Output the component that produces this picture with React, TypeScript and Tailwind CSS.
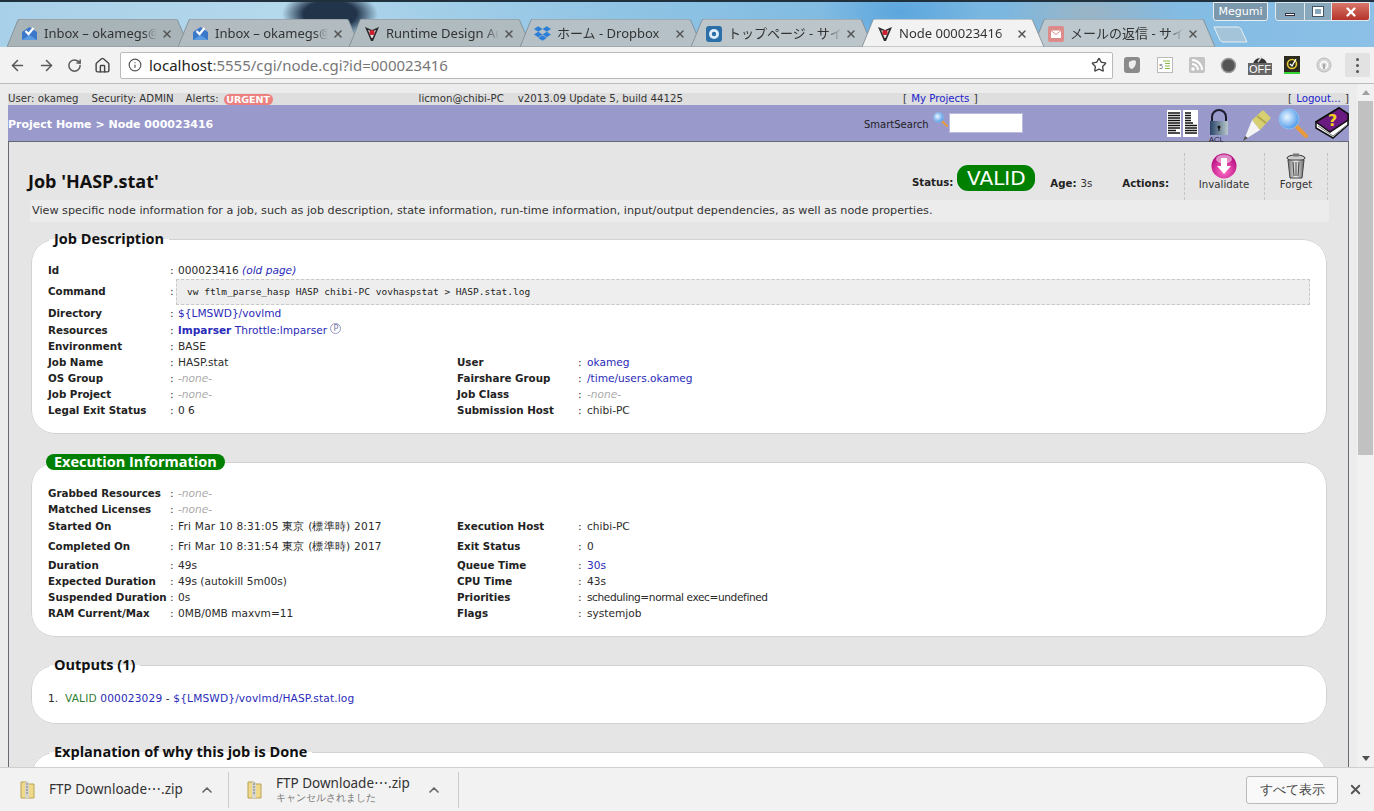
import React from "react";
import { ArrowLeft, ArrowRight, RotateCw, Home, Info, Star, X, ChevronUp } from "lucide-react";
import { FaDropbox } from "react-icons/fa";

const VERDANA = "font-['DejaVu_Sans',sans-serif]";

function InboxIcon() {
    return (
        <svg width="17" height="15" viewBox="0 0 17 15">
            <path d="M1 6l7.500-5 7.500 5v8H1z" fill="#3b78c9" />
            <path d="M1 14l7.500-5 7.500 5z" fill="#5b9be0" />
            <path d="M4.500 5l3 3 5-6" fill="none" stroke="#fff" strokeWidth="2.200" />
        </svg>
    );
}

function VovIcon() {
    return (
        <svg width="16" height="16" viewBox="0 0 16 16">
            <path d="M1 1l7 3 7-3-6 14H7z" fill="#2a2a2a" />
            <path d="M4 4l4 1.500L12 4 8.500 12h-1z" fill="#e6e6e6" />
            <circle cx="8" cy="6.500" r="2.600" fill="#cc2030" />
        </svg>
    );
}

function BlueCircleIcon() {
    return (
        <svg width="16" height="16" viewBox="0 0 16 16">
            <rect width="16" height="16" rx="3" fill="#2a6fa8" />
            <circle cx="8" cy="8" r="5" fill="#dfeefa" />
            <circle cx="8" cy="8" r="2.200" fill="#2a6fa8" />
        </svg>
    );
}

function MailIcon() {
    return (
        <svg width="16" height="16" viewBox="0 0 16 16">
            <rect width="16" height="16" rx="2" fill="#dd8a8a" />
            <rect x="3" y="4.500" width="10" height="7.500" fill="#fff" />
            <path d="M3 4.500l5 4 5-4" fill="none" stroke="#dd8a8a" />
        </svg>
    );
}

const tabs = [
    { title: "Inbox – okamegs@", icon: <InboxIcon />, bg: "#a9b4b9" },
    { title: "Inbox – okamegs@", icon: <InboxIcon />, bg: "#b1bbc0" },
    { title: "Runtime Design Au", icon: <VovIcon />, bg: "#b0bbc0" },
    { title: "ホーム - Dropbox", icon: <FaDropbox className="text-[#2c7ed6] text-[17px]" />, bg: "#b5c1c6" },
    { title: "トップページ - サイ", icon: <BlueCircleIcon />, bg: "#bcc5c9" },
    { title: "Node 000023416", icon: <VovIcon />, bg: "#f2f2f2", active: true },
    { title: "メールの返信 - サイ", icon: <MailIcon />, bg: "#bcc8ce" },
];

function Tab({ title, icon, bg, active }: { title: string; icon: React.ReactNode; bg: string; active?: boolean }) {
    return (
        <div className={`relative w-[182px] h-[28px] mr-[-11px] flex items-center pt-[1px] shrink-0 ${active ? "z-10" : ""}`}>
            <svg className="absolute inset-0" width="182" height="28" viewBox="0 0 182 28">
                <path d="M0 28L11 1Q11.500 0 13 0H168Q170 0 170.500 1L182 28z" fill={bg} stroke="#7b8890" strokeWidth="0.800" />
            </svg>
            <span className="relative w-[37px] flex justify-center pl-[8px]">{icon}</span>
            <span className="relative w-[113px] overflow-hidden whitespace-nowrap text-[13px] text-[#333] [mask-image:linear-gradient(to_right,black_88%,transparent)]">
                {title}
            </span>
            <X className="relative ml-[4px] text-[#555]" size={12} strokeWidth={3} />
        </div>
    );
}

function TabStrip() {
    return (
        <div className="h-[47px] shrink-0 flex flex-col border-t-2 border-[#20303c] bg-[radial-gradient(ellipse_48px_24px_at_330px_12px,#22344a_55%,transparent),radial-gradient(ellipse_80px_40px_at_900px_10px,#5ba6de,transparent),radial-gradient(ellipse_90px_30px_at_1090px_10px,#9bb4c4,transparent),linear-gradient(to_right,#a8d0e8,#b4d8ec_20%,#90c4e4_45%,#78b6e0_70%,#8cc0e6)]">
            <div className="h-[17px] flex justify-end pr-[4px] items-start">
                <div className={`w-[55px] h-[19px] border border-[#e8eef3] rounded-b-[3px] bg-[#7c98ac] text-white text-[11px] text-center leading-[17px] ${VERDANA}`}>
                    Megumi
                </div>
                <div className="ml-[7px] w-[95px] h-[19px] flex">
                    <div className="w-[30px] border border-[#dfe8ee] rounded-bl-[3px] bg-[#8aa8bc] flex items-end justify-center pb-[4px]">
                        <div className="w-[10px] h-[3px] bg-white border border-[#334]" />
                    </div>
                    <div className="w-[27px] border-y border-r border-[#dfe8ee] bg-[#8aa8bc] flex items-center justify-center">
                        <div className="w-[10px] h-[9px] bg-transparent border-2 border-white outline outline-[#456]" />
                    </div>
                    <div className="flex-1 rounded-br-[3px] border-y border-r border-[#dfe8ee] bg-[linear-gradient(#d8776a,#b5332a)] flex items-center justify-center">
                        <X className="text-white" size={14} strokeWidth={4} />
                    </div>
                </div>
            </div>
            <div className="pl-[7px] flex items-end h-[28px]">
                {tabs.map((t, i) => (
                    <Tab key={i} {...t} />
                ))}
                <svg className="ml-[9px] mb-[4px]" width="36" height="17" viewBox="0 0 36 17">
                    <path d="M1 1H25Q27 1 28 3L34 16H10Q8 16 7 14z" fill="#a4c4da" stroke="#e6eef4" />
                </svg>
            </div>
        </div>
    );
}

function ExtIcons() {
    return (
        <div className="flex items-center">
            <div className="w-[32px] flex justify-center">
                <svg width="16" height="16" viewBox="0 0 16 16"><rect width="16" height="16" rx="3" fill="#8a8a8a" /><path d="M5 5q4-3 7-1 0 6-4 8-4 0-3-7z" fill="#eee" /></svg>
            </div>
            <div className="w-[33px] flex justify-center">
                <svg width="16" height="16" viewBox="0 0 16 16"><rect x="0.500" y="0.500" width="15" height="15" fill="#fff" stroke="#bbb" /><path d="M6 4h7M8 6.500h5M8 9h5M8 11.500h5" stroke="#8cb84a" /><text x="2" y="12" fontSize="7" fill="#666">5</text></svg>
            </div>
            <div className="w-[31px] flex justify-center">
                <svg width="16" height="16" viewBox="0 0 16 16"><rect width="16" height="16" rx="2" fill="#c4c4c4" /><circle cx="4" cy="12" r="1.800" fill="#fff" /><path d="M3 7a6 6 0 0 1 6 6M3 3a10 10 0 0 1 10 10" fill="none" stroke="#fff" strokeWidth="2" /></svg>
            </div>
            <div className="w-[32px] flex justify-center">
                <svg width="17" height="17" viewBox="0 0 17 17"><circle cx="8.500" cy="8.500" r="7" fill="#555" stroke="#999" strokeWidth="1.500" /></svg>
            </div>
            <div className="relative w-[32px] h-[24px] flex justify-center">
                <svg width="16" height="12" viewBox="0 0 16 12"><path d="M1 12a7 7 0 0 1 14 0z" fill="#333" /><path d="M6 9l4-6" stroke="#ddd" strokeWidth="1.500" /></svg>
                <span className="absolute left-[4px] top-[10px] w-[24px] h-[12px] bg-[#666] text-white text-[11px] leading-[12px] text-center font-['Liberation_Sans',sans-serif]">OFF</span>
            </div>
            <div className="w-[32px] flex justify-center">
                <svg width="16" height="18" viewBox="0 0 16 18"><rect width="16" height="16" fill="#2a2a1e" /><rect y="16" width="16" height="2" fill="#35d435" /><circle cx="8" cy="8" r="4.500" fill="none" stroke="#e8c832" strokeWidth="1.600" /><path d="M6 8l2 2 4-7" fill="none" stroke="#fff" strokeWidth="1.300" /></svg>
            </div>
            <div className="w-[32px] flex justify-center">
                <svg width="16" height="16" viewBox="0 0 16 16"><circle cx="8" cy="8" r="7" fill="#d6d6d6" stroke="#bbb" /><circle cx="8" cy="8" r="3.500" fill="none" stroke="#fff" strokeWidth="1.500" /><rect x="7" y="7" width="2" height="5" fill="#aaa" /></svg>
            </div>
            <div className="ml-[5px] w-[25px] h-[24px] rounded-[2px] bg-[#e2e2e2] flex flex-col items-center justify-center gap-[3px]">
                <span className="w-[3px] h-[3px] rounded-full bg-[#555]" />
                <span className="w-[3px] h-[3px] rounded-full bg-[#555]" />
                <span className="w-[3px] h-[3px] rounded-full bg-[#555]" />
            </div>
        </div>
    );
}

function Toolbar() {
    return (
        <div className="h-[37px] shrink-0 bg-[#f2f2f2] border-b border-[#bdbdbd] flex items-center">
            <div className="w-[120px] flex items-center pl-[9px] gap-[12px] text-[#5a5a5a]">
                <ArrowLeft size={17} strokeWidth={2.200} />
                <ArrowRight size={17} strokeWidth={2.200} />
                <RotateCw size={15} strokeWidth={2.400} />
                <Home size={17} strokeWidth={2} className="text-[#444]" />
            </div>
            <div className="w-[993px] h-[27px] bg-white border border-[#bababa] rounded-[2px] flex items-center pl-[7px] pr-[5px] text-[15px] font-['Noto_Sans',sans-serif]">
                <Info size={14} className="text-[#555] mr-[7px]" />
                <span className="text-[#222]">localhost</span>
                <span className="text-[#777]">:5555/cgi/node.cgi?id=000023416</span>
                <Star size={16} strokeWidth={2} className="ml-auto text-[#444]" />
            </div>
            <div className="ml-[3px]">
                <ExtIcons />
            </div>
        </div>
    );
}

function TopStrip() {
    return (
        <div className="mt-[9px] h-[12px] bg-[#dedede] flex items-center text-[10.200px] leading-[12px] text-[#333] whitespace-nowrap">
            <span>User: okameg</span>
            <span className="ml-[13px]">Security: ADMIN</span>
            <span className="ml-[12px]">Alerts:</span>
            <span className="ml-[5px] w-[49px] h-[11px] rounded-full bg-[#ec8080] text-white font-bold text-[9.500px] leading-[11px] text-center">URGENT</span>
            <span className="ml-[146px]">licmon@chibi-PC</span>
            <span className="ml-[14px]">v2013.09 Update 5, build 44125</span>
            <span className="ml-[220px]">[ <a className="mx-[1px] text-[#2222cc]">My Projects</a> ]</span>
            <span className="ml-auto">[ <a className="mx-[1px] text-[#2222cc]">Logout...</a> ]</span>
        </div>
    );
}

function DocIcon() {
    return (
        <svg width="31" height="27" viewBox="0 0 31 27">
            <rect width="14" height="27" fill="#fff" />
            <rect x="16" width="15" height="27" fill="#fff" />
            <path d="M1 3h12M1 5.500h12M1 8h12M1 10.500h12M1 13h12M1 15.500h12M1 18h12M1 20.500h8M1 23h12M18 3h6M18 5.500h6M18 8h6M18 10.500h6M18 13h8M18 15.500h12M18 18h12M18 20.500h12M18 23h12" stroke="#111" strokeWidth="1.300" />
        </svg>
    );
}

function LockIcon() {
    return (
        <svg width="24" height="33" viewBox="0 0 24 33">
            <defs>
                <linearGradient id="lk" x1="0" x2="1">
                    <stop offset="0" stopColor="#2a4468" />
                    <stop offset="1" stopColor="#b8c8cc" />
                </linearGradient>
            </defs>
            <path d="M5 12V8a7 7 0 0 1 14 0v4" fill="none" stroke="#1c1c2c" strokeWidth="2" />
            <rect x="3" y="12" width="18" height="14" fill="url(#lk)" />
            <circle cx="12" cy="18" r="1.500" fill="#111" />
            <rect x="11.400" y="18" width="1.200" height="4" fill="#111" />
            <text x="2" y="32.500" fontSize="7.500" fill="#223" fontFamily="Liberation Sans">ACL</text>
        </svg>
    );
}

function PencilIcon() {
    return (
        <svg width="30" height="32" viewBox="0 0 30 32">
            <path d="M10 11L21 1l8 8-11 12z" fill="#d8cf70" />
            <path d="M15 7l9 7" stroke="#b0a850" strokeWidth="2" />
            <path d="M10 11l8 10L2 31z" fill="#f4f4f4" />
            <path d="M1 32l2-5 3 2z" fill="#555" />
        </svg>
    );
}

function GlassIcon({ size = 30 }: { size?: number }) {
    return (
        <svg width={size} height={size} viewBox="0 0 30 30">
            <defs>
                <radialGradient id={`gl${size}`} cx="0.400" cy="0.400" r="0.700">
                    <stop offset="0" stopColor="#eaf6ff" />
                    <stop offset="1" stopColor="#3b8ee8" />
                </radialGradient>
            </defs>
            <path d="M18 18l10 10" stroke="#e89a3c" strokeWidth="4" strokeLinecap="round" />
            <circle cx="11" cy="11" r="10" fill={`url(#gl${size})`} stroke="#8cc0f0" />
        </svg>
    );
}

function BookIcon() {
    return (
        <svg width="34" height="32" viewBox="0 0 34 32">
            <path d="M1 15L24 1l9 6v11L18 31 1 21z" fill="#fff" stroke="#111" strokeWidth="1.500" />
            <path d="M1 15L24 1l9 6v6L15 25z" fill="#6a1a80" stroke="#111" strokeWidth="1.500" />
            <text x="13" y="19" fontSize="16" fontWeight="bold" fill="#f0d020" fontFamily="DejaVu Sans">?</text>
            <path d="M3 19l15 10M18 29l14-11" stroke="#777" />
        </svg>
    );
}

function PurpleBar() {
    return (
        <div className="h-[36px] bg-[#9999cc] flex items-center relative">
            <span className="mt-[5px] w-[205px] whitespace-nowrap text-white font-bold text-[11px]">Project Home &gt; Node 000023416</span>
            <span className="ml-[651px] w-[63px] mt-[3px] text-[10px] text-[#222] whitespace-nowrap">SmartSearch</span>
            <span className="ml-[6px] mb-[8px] w-[16px]"><GlassIcon size={15} /></span>
            <div className="w-[74px] h-[20px] bg-white border border-[#bbbbdd]" />
            <div className="ml-[144px] flex items-center">
                <DocIcon />
                <span className="ml-[9px] mt-[4px]"><LockIcon /></span>
                <span className="ml-[11px] mt-[3px]"><PencilIcon /></span>
                <span className="ml-[6px]"><GlassIcon /></span>
                <span className="ml-[7px] mt-[-1px]"><BookIcon /></span>
            </div>
        </div>
    );
}

function InvalidateIcon() {
    return (
        <svg width="26" height="26" viewBox="0 0 26 26">
            <defs>
                <radialGradient id="inv" cx="0.500" cy="0.700" r="0.700">
                    <stop offset="0" stopColor="#ff70c8" />
                    <stop offset="1" stopColor="#b00078" />
                </radialGradient>
            </defs>
            <circle cx="13" cy="13" r="12.500" fill="url(#inv)" />
            <ellipse cx="13" cy="6" rx="8" ry="4.500" fill="#fff" opacity="0.500" />
            <path d="M10 5h6v8h4l-7 8-7-8h4z" fill="#fff" />
        </svg>
    );
}

function TrashIcon() {
    return (
        <svg width="20" height="26" viewBox="0 0 20 26">
            <defs>
                <linearGradient id="tr" x1="0" x2="1">
                    <stop offset="0" stopColor="#777" />
                    <stop offset="0.500" stopColor="#eee" />
                    <stop offset="1" stopColor="#666" />
                </linearGradient>
            </defs>
            <ellipse cx="10" cy="5" rx="9" ry="3" fill="#ccc" stroke="#333" />
            <rect x="7" y="0.500" width="6" height="3" fill="#777" />
            <path d="M2 7h16l-2 18H4z" fill="url(#tr)" stroke="#444" />
            <path d="M7 9l1 14M10 9v14M13 9l-1 14" stroke="#444" />
        </svg>
    );
}

function JobHeader() {
    return (
        <div className="h-[58px] pl-[19px] pr-[20px] flex items-end text-[10.200px] text-[#333]">
            <h1 className="mb-[9px] text-[18px] leading-[20px] font-bold text-[#111] font-['Open_Sans',sans-serif]">Job 'HASP.stat'</h1>
            <span className="ml-auto mb-[10px] font-bold text-[#222]">Status:</span>
            <span className="ml-[4px] mb-[9px] w-[78px] h-[26px] rounded-[11px] bg-[#008000] text-white text-[20px] leading-[26px] text-center">VALID</span>
            <span className="ml-[15px] mb-[9px] font-bold text-[#222]">Age:</span>
            <span className="ml-[4px] mb-[9px]">3s</span>
            <span className="ml-[30px] mb-[9px] font-bold text-[#222]">Actions:</span>
            <div className="ml-[15px] w-[81px] h-[47px] border-x border-dashed border-[#c4c4c4] flex flex-col items-center pr-[1px]">
                <InvalidateIcon />
                <span className="leading-[12px]">Invalidate</span>
            </div>
            <div className="w-[63px] h-[47px] border-r border-dashed border-[#c4c4c4] flex flex-col items-center">
                <TrashIcon />
                <span className="leading-[12px]">Forget</span>
            </div>
        </div>
    );
}

const NONE = <i className="text-[#aaaaaa]">-none-</i>;

function Cell({ label, value, wide }: { label: string; value: React.ReactNode; wide?: boolean }) {
    return (
        <div className={`flex items-center ${wide ? "flex-1" : "w-[409px]"}`}>
            <span className={`font-bold text-[10.300px] text-[#222] whitespace-nowrap ${wide ? "w-[121px]" : "w-[122px]"}`}>{label}</span>
            <span className={`${wide ? "w-[9px]" : "w-[8px]"}`}>:</span>
            <span className="whitespace-nowrap">{value}</span>
        </div>
    );
}

function Row({ h = "h-[16px]", left, right }: { h?: string; left: [string, React.ReactNode]; right?: [string, React.ReactNode] }) {
    return (
        <div className={`flex items-center ${h}`}>
            <Cell label={left[0]} value={left[1]} />
            {right && <Cell label={right[0]} value={right[1]} wide />}
        </div>
    );
}

function Card({ title, green, children, className }: { title: string; green?: boolean; children: React.ReactNode; className?: string }) {
    return (
        <fieldset className={`ml-[22px] mr-[21px] min-w-0 bg-white border border-[#d2d2d2] rounded-[24px] px-[16px] ${className ?? ""}`}>
            {green ? (
                <legend className="ml-[-2px] px-[8px] h-[16px] rounded-full bg-[#008000] text-white font-bold text-[14.500px] leading-[16px] font-['Open_Sans',sans-serif]">
                    {title}
                </legend>
            ) : (
                <legend className="ml-[1px] px-[5px] text-[#111] font-bold text-[14.500px] leading-[18px] font-['Open_Sans',sans-serif]">
                    {title}
                </legend>
            )}
            {children}
        </fieldset>
    );
}

const Blue = ({ children }: { children: React.ReactNode }) => <a className="text-[#2a2ab8]">{children}</a>;

function JobDescription() {
    return (
        <Card title="Job Description" className="h-[204px] mt-[8px]">
            <div className="pt-[15px]">
                <Row left={["Id", <>000023416 <i className="text-[#2a2ab8]">(old page)</i></>]} />
                <div className="h-[26px] flex items-center">
                    <span className="w-[122px] font-bold text-[10.300px] text-[#222]">Command</span>
                    <span className="w-[6px]">:</span>
                    <div className="w-[1134px] h-[26px] bg-[#eeeeee] border border-dashed border-[#c8c8c8] pl-[10px] text-[9.500px] leading-[24px] text-[#222] font-['DejaVu_Sans_Mono',monospace]">
                        vw ftlm_parse_hasp HASP chibi-PC vovhaspstat &gt; HASP.stat.log
                    </div>
                </div>
                <Row h="h-[17px]" left={["Directory", <Blue>{"${LMSWD}/vovlmd"}</Blue>]} />
                <Row h="h-[17px]" left={["Resources", <><b className="text-[#2a2ab8]">lmparser</b> <Blue>Throttle:lmparser</Blue> <span className="inline-block w-[11px] h-[11px] rounded-full border border-[#9a9ac4] text-[8px] leading-[9px] text-center align-top text-[#7a7aa8]">P</span></>]} />
                <Row left={["Environment", "BASE"]} />
                <Row left={["Job Name", "HASP.stat"]} right={["User", <Blue>okameg</Blue>]} />
                <Row left={["OS Group", NONE]} right={["Fairshare Group", <Blue>/time/users.okameg</Blue>]} />
                <Row left={["Job Project", NONE]} right={["Job Class", NONE]} />
                <Row left={["Legal Exit Status", "0 6"]} right={["Submission Host", "chibi-PC"]} />
            </div>
        </Card>
    );
}

function ExecInfo() {
    return (
        <Card title="Execution Information" green className="h-[183px] mt-[20px]">
            <div className="pt-[16px]">
                <Row left={["Grabbed Resources", NONE]} />
                <Row left={["Matched Licenses", NONE]} />
                <Row h="h-[18px]" left={["Started On", <span className="tracking-[0.2px]">Fri Mar 10 8:31:05 東京 (標準時) 2017</span>]} right={["Execution Host", "chibi-PC"]} />
                <Row h="h-[22px]" left={["Completed On", <span className="tracking-[0.2px]">Fri Mar 10 8:31:54 東京 (標準時) 2017</span>]} right={["Exit Status", "0"]} />
                <Row left={["Duration", "49s"]} right={["Queue Time", <Blue>30s</Blue>]} />
                <Row left={["Expected Duration", "49s (autokill 5m00s)"]} right={["CPU Time", "43s"]} />
                <Row left={["Suspended Duration", "0s"]} right={["Priorities", <span className="tracking-[-0.4px]">scheduling=normal exec=undefined</span>]} />
                <Row left={["RAM Current/Max", "0MB/0MB maxvm=11"]} right={["Flags", "systemjob"]} />
            </div>
        </Card>
    );
}

function Outputs() {
    return (
        <Card title="Outputs (1)" className="h-[68px] mt-[19px]">
            <div className="pt-[16px] leading-[16px] whitespace-nowrap flex">
                <span className="w-[17px]">1.</span>
                <span className="tracking-[0.15px]"><span className="text-[#2e7d32]">VALID</span> <Blue>000023029</Blue> - <Blue>{"${LMSWD}/vovlmd/HASP.stat.log"}</Blue></span>
            </div>
        </Card>
    );
}

function Page() {
    return (
        <div className="flex-1 min-h-0 flex overflow-hidden">
            <div className={`flex-1 min-w-0 pl-[8px] pr-[8px] bg-[#ececec] ${VERDANA}`}>
                <TopStrip />
                <PurpleBar />
                <div className="border border-[#666a70] bg-[#e5e5e5] h-[700px] text-[10.600px] text-[#2a2a2a]">
                    <JobHeader />
                    <div className="ml-[21px] mr-[19px] h-[22px] bg-[#ececec] pl-[2px] text-[11.200px] leading-[22px] text-[#333] whitespace-nowrap">
                        View specific node information for a job, such as job description, state information, run-time information, input/output dependencies, as well as node properties.
                    </div>
                    <JobDescription />
                    <ExecInfo />
                    <Outputs />
                    <Card title="Explanation of why this job is Done" className="h-[60px] mt-[19px]">
                        <span />
                    </Card>
                </div>
            </div>
            <div className="w-[17px] shrink-0 bg-[#f1f1f1] flex flex-col items-center">
                <div className="h-[17px] pt-[6px]">
                    <div className="w-0 h-0 border-x-[4px] border-x-transparent border-b-[5px] border-b-[#a0a0a0]" />
                </div>
                <div className="w-[15px] h-[354px] bg-[#c1c1c1]" />
                <div className="mt-auto h-[17px] pt-[6px]">
                    <div className="w-0 h-0 border-x-[4px] border-x-transparent border-t-[5px] border-t-[#505050]" />
                </div>
            </div>
        </div>
    );
}

function ZipIcon() {
    return (
        <svg width="15" height="18" viewBox="0 0 15 18">
            <path d="M1 1h6l2 2h5v14H1z" fill="#efd98a" stroke="#b9a257" />
            <rect x="5" y="1" width="4" height="16" fill="#d6d6d0" />
            <path d="M6 3h2M6 6h2M6 9h2M6 12h2" stroke="#777" />
        </svg>
    );
}

function DownloadBar() {
    return (
        <div className="h-[44px] shrink-0 bg-[#f2f2f2] border-t border-[#cfcfcf] flex items-center text-[#333] font-['Noto_Sans',sans-serif]">
            <div className="w-[229px] h-[36px] border-r border-[#cccccc] flex items-center pl-[20px]">
                <ZipIcon />
                <span className="ml-[14px] text-[13.500px] whitespace-nowrap">FTP Downloade⋯.zip</span>
                <ChevronUp className="ml-[16px] text-[#666]" size={16} strokeWidth={2.500} />
            </div>
            <div className="w-[230px] h-[36px] border-r border-[#cccccc] flex items-center pl-[18px]">
                <ZipIcon />
                <div className="ml-[14px] flex flex-col">
                    <span className="text-[13.500px] leading-[15px] whitespace-nowrap">FTP Downloade⋯.zip</span>
                    <span className="text-[10px] leading-[13px] text-[#777]">キャンセルされました</span>
                </div>
                <ChevronUp className="ml-[16px] text-[#666]" size={16} strokeWidth={2.500} />
            </div>
            <button className="ml-auto w-[92px] h-[28px] bg-[#f9f9f9] border border-[#bbbbbb] rounded-[3px] text-[13px] text-[#444]">
                すべて表示
            </button>
            <X className="ml-[10px] mr-[11px] text-[#555]" size={15} strokeWidth={3} />
        </div>
    );
}

export default function App() {
    return (
        <div className="h-[811px] w-[1374px] overflow-hidden flex flex-col font-['Noto_Sans','Noto_Sans_CJK_JP',sans-serif]">
            <TabStrip />
            <Toolbar />
            <Page />
            <DownloadBar />
        </div>
    );
}
